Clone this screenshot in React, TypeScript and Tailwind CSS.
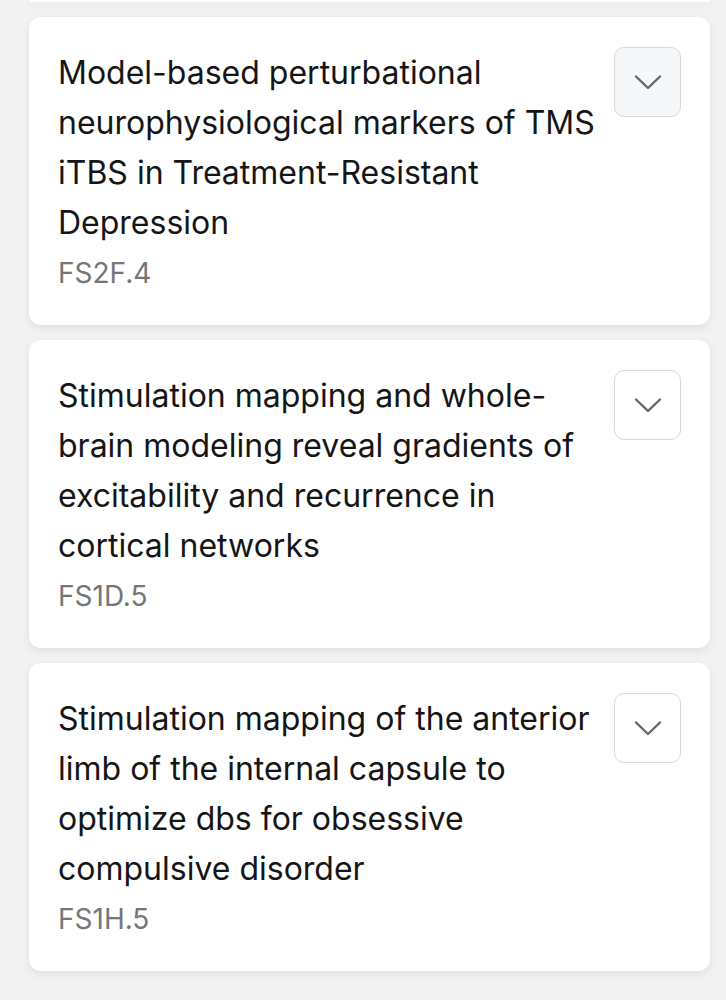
import { useState } from 'react';

type Talk = {
  title: string;
  code: string;
};

const talks: Talk[] = [
  {
    title: 'Model-based perturbational neurophysiological markers of TMS iTBS in Treatment-Resistant Depression',
    code: 'FS2F.4',
  },
  {
    title: 'Stimulation mapping and whole-brain modeling reveal gradients of excitability and recurrence in cortical networks',
    code: 'FS1D.5',
  },
  {
    title: 'Stimulation mapping of the anterior limb of the internal capsule to optimize dbs for obsessive compulsive disorder',
    code: 'FS1H.5',
  },
];

function Chevron() {
  return (
    <svg width="28" height="16" viewBox="0 0 28 16" fill="none" className="text-[#62666d]">
      <path d="M2 2.5l12 11.5 12-11.5" stroke="currentColor" strokeWidth="2.4" strokeLinecap="round" strokeLinejoin="round" />
    </svg>
  );
}

function TalkCard({ talk, active }: { talk: Talk; active?: boolean }) {
  const [open, setOpen] = useState(false);
  return (
    <div className="flex items-start gap-3 rounded-xl bg-white px-[29px] pt-[30px] pb-[27px] shadow-[0_3px_8px_rgba(0,0,0,0.08)]">
      <div className="mt-[1px] flex-1 leading-[50px]">
        <p className="text-[32px] text-[#151515]">{talk.title}</p>
        <p className="text-[28px] text-[#767676]">{talk.code}</p>
      </div>
      <button
        onClick={() => setOpen(!open)}
        className={
          'flex h-[70px] w-[67px] shrink-0 items-center justify-center rounded-[10px] border border-[#d6d8dc] ' +
          (active ? 'bg-[#f6f7f9]' : 'bg-white')
        }
      >
        <Chevron />
      </button>
    </div>
  );
}

export default function App() {
  return (
    <div className="min-h-screen w-[726px] bg-[#f2f2f2] pl-[29px] pr-[16px] font-['Inter',sans-serif]">
      <div className="h-[2px] rounded-b-xl bg-white shadow-[0_3px_8px_rgba(0,0,0,0.08)]" />
      <div className="mt-[15px] flex flex-col gap-[15px] pb-10">
        {talks.map((t, i) => (
          <TalkCard key={t.code} talk={t} active={i === 0} />
        ))}
      </div>
    </div>
  );
}
